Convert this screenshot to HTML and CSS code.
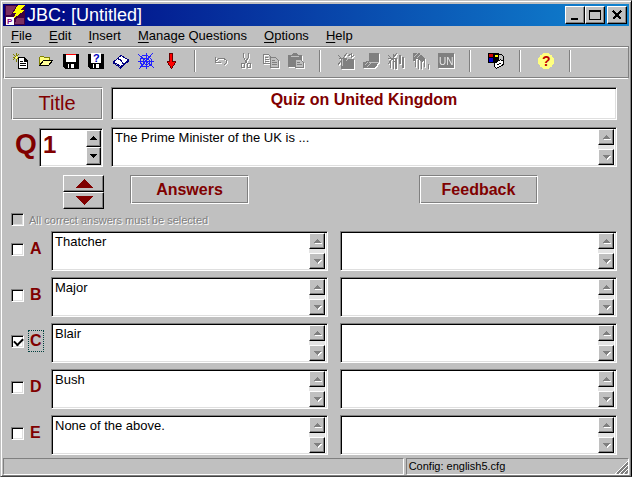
FILE: index.html
```html
<!DOCTYPE html>
<html lang="en">
<head>
    <meta charset="UTF-8">
    <meta name="viewport" content="width=device-width, initial-scale=1.0">
    <title>JBC: [Untitled]</title>
    <link rel="stylesheet" href="styles.css">
</head>
<body>
    <svg class="defs" width="0" height="0" aria-hidden="true">
        <symbol id="up" viewBox="0 0 7 4"><path d="M3 0h1v1h1v1h1v1h1v1H0V3h1V2h1V1h1z"/></symbol>
        <symbol id="down" viewBox="0 0 7 4"><path d="M0 0h7v1H6v1H5v1H4v1H3V3H2V2H1V1H0z"/></symbol>
    </svg>
    <div class="window">
        <header class="titlebar">
            <svg class="app-icon" viewBox="0 0 20 20" aria-hidden="true">
                <path fill="#400040" d="M0 0h20v20H0z"/>
                <path fill="#7c3060" d="M1 1h10L6 10H1zM12 13h7v6h-9z"/>
                <path fill="#ff0" d="M13 0h7l-4 5h4L8 14l3-6H8z"/>
                <path fill="#fff" d="M1 12h8v8H1z"/>
                <text x="2" y="19" class="tiny" fill="#800080">P</text>
            </svg>
            <h1>JBC: [Untitled]</h1>
            <div class="window-buttons">
                <button type="button" aria-label="Minimize"><svg viewBox="0 0 12 12"><path d="M2 9h7v2H2z"/></svg></button>
                <button type="button" aria-label="Maximize"><svg viewBox="0 0 12 12"><path fill-rule="evenodd" d="M0 1h12v10H0zM1 3v7h10V3z"/></svg></button>
                <button type="button" class="close" aria-label="Close"><svg viewBox="0 0 12 12"><path fill="none" stroke="#000" stroke-width="2" d="M2 2l8 8M10 2l-8 8"/></svg></button>
            </div>
        </header>

        <nav class="menubar">
            <a href="#"><u>F</u>ile</a>
            <a href="#"><u>E</u>dit</a>
            <a href="#"><u>I</u>nsert</a>
            <a href="#"><u>M</u>anage Questions</a>
            <a href="#"><u>O</u>ptions</a>
            <a href="#"><u>H</u>elp</a>
        </nav>

        <div class="toolbar">
            <button type="button" aria-label="New">
                <svg viewBox="0 0 16 16">
                    <path stroke="#808000" d="M3 0v9M0 4h8M0 1l6 6M6 1L0 7"/>
                    <path stroke="#ff6" d="M3 3v3M2 4h3"/>
                    <path fill="#fff" stroke="#000" d="M5.500 4.500h6l3 3v8h-9z"/>
                    <path stroke="#000" d="M11.500 4v4h3M7 8.500h3M7 10.500h6M7 12.500h6"/>
                </svg>
            </button>
            <button type="button" aria-label="Open">
                <svg viewBox="0 0 16 16">
                    <path fill="#ffff80" stroke="#808000" d="M1.500 12.500v-8l1-1h3l1 1h5v3h3l-4 5z"/>
                    <path fill="#ff9" stroke="#000" d="M1.500 12.500l4-5h9l-4 5z"/>
                </svg>
            </button>
            <button type="button" aria-label="Save">
                <svg viewBox="0 0 16 16">
                    <path fill="#000" d="M0 1h16v15H2l-2-2z"/>
                    <path fill="#fff" d="M3 2h10v7H3zM5 11h6v4H5z"/>
                    <path fill="#f00" d="M3 1h10v1H3z"/>
                    <path fill="#000" d="M6 11h2v4H6z"/>
                </svg>
            </button>
            <button type="button" aria-label="Save as">
                <svg viewBox="0 0 16 16">
                    <path fill="#000" d="M0 1h16v15H2l-2-2z"/>
                    <path fill="#fff" d="M3 0h10v10H3zM5 11h6v4H5z"/>
                    <path fill="#000" d="M6 11h2v4H6z"/>
                    <text x="5" y="9" class="small-mark" fill="#0000c0">?</text>
                </svg>
            </button>
            <button type="button" aria-label="Web page">
                <svg viewBox="0 0 16 16">
                    <path fill="#fff" stroke="#000080" d="M.5 9L8 2.500 15.500 7 8 13.500z"/>
                    <path stroke="#000080" fill="none" d="M.5 9v1l7 5 8-7V7M4.500 5.500l3 1.500 3 4"/>
                </svg>
            </button>
            <button type="button" aria-label="Export web">
                <svg viewBox="0 0 16 16">
                    <path fill="none" stroke="#22f" d="M0 1l16 14M15 0L1 16M8 0v16M0 8h16M4 3l5-1 4 4 1 5-5 3-5-1-2-5zM6 5h4l2 4-3 3-4-2z"/>
                </svg>
            </button>
            <button type="button" aria-label="Download">
                <svg viewBox="0 0 16 16">
                    <path fill="#f00" stroke="#600" d="M6.500.5h3v8h3v1l-4 6-4-6v-1h2z"/>
                </svg>
            </button>
            <span class="separator"></span>
            <button type="button" disabled aria-label="Undo">
                <svg viewBox="0 0 16 16"><path fill="none" stroke="#808080" d="M2.500 4v5h5M3 8l3-3h4l3 2v3l-2 2"/></svg>
            </button>
            <button type="button" disabled aria-label="Cut">
                <svg viewBox="0 0 16 16"><path fill="none" stroke="#808080" d="M5.500 0v4l4 7M10.500 0v4l-4 7M3.500 10.500h3v4h-3zM9.500 10.500h3v4h-3z"/></svg>
            </button>
            <button type="button" disabled aria-label="Copy">
                <svg viewBox="0 0 16 16">
                    <path fill="none" stroke="#808080" d="M.5 1.500h5l2 2v7h-7zM2 4.500h3M2 6.500h4M2 8.500h4"/>
                    <path fill="#c0c0c0" stroke="#808080" d="M7.500 4.500h5l3 3v7h-8zM9 7.500h3M9 9.500h5M9 11.500h5"/>
                </svg>
            </button>
            <button type="button" disabled aria-label="Paste">
                <svg viewBox="0 0 16 16">
                    <path fill="#808080" d="M0 2h4l1-2h4l1 2h4v12H0z"/>
                    <path fill="#c0c0c0" stroke="#808080" d="M7.500 6.500h5l3 3v5h-8zM9 9.500h3M9 11.500h5"/>
                    <path stroke="#c0c0c0" d="M3 3.500h8"/>
                </svg>
            </button>
            <span class="separator"></span>
            <button type="button" disabled aria-label="Web link">
                <svg viewBox="0 0 16 16">
                    <path fill="#808080" d="M3 6h13v10H3z"/>
                    <path fill="none" stroke="#808080" d="M0 2l9 9M9 0L0 12M1 5h8M10 3l3-2v4l3-3"/>
                    <path stroke="#c0c0c0" d="M4 6v7M8 8l3-3"/>
                </svg>
            </button>
            <button type="button" disabled aria-label="Picture">
                <svg viewBox="0 0 16 16">
                    <path fill="#808080" d="M6 0h10v9l-4 6H0V9l6-1z"/>
                    <path fill="none" stroke="#c0c0c0" d="M6 9l4 1 6-1M2 12l3-3M4 14l4-4"/>
                </svg>
            </button>
            <button type="button" disabled aria-label="Local link">
                <svg viewBox="0 0 16 16">
                    <path fill="none" stroke="#808080" d="M0 2l9 9M9 0L0 11M0 5h9M5 1v15M2 9v6"/>
                    <path stroke="#808080" stroke-width="2" d="M8 5v11M12 2v9M15 4v11"/>
                </svg>
            </button>
            <button type="button" disabled aria-label="Media link">
                <svg viewBox="0 0 16 16">
                    <path fill="#808080" d="M0 0h7l5 6-3 3-5-4-3 3H0z"/>
                    <path stroke="#808080" d="M2.500 6v8M5.500 4v12M8.500 8v8M11.500 6v8M15.500 11v5M0 5h10"/>
                    <path stroke="#c0c0c0" d="M1 4l4-4M4 5l4-4"/>
                </svg>
            </button>
            <button type="button" disabled aria-label="Unicode">
                <svg viewBox="0 0 16 16">
                    <path fill="#808080" d="M0 0h16v15H0z"/>
                    <text x="1" y="12" class="unicode" fill="#e8e8e8">UN</text>
                </svg>
            </button>
            <span class="separator"></span>
            <button type="button" aria-label="Configuration">
                <svg viewBox="0 0 16 16">
                    <path d="M0 0h11v10H0z"/>
                    <path fill="#c00" d="M1 1h4v3H1z"/>
                    <path fill="#00c" d="M1 5h4v4H1z"/>
                    <path fill="#ff0" d="M7 2h3v2H7z"/>
                    <path fill="none" stroke="#000" d="M10.500 1.500h3l2 2v4"/>
                    <path fill="#fff" stroke="#000" d="M6.500 10.500l6-4 3 2v3l-7 4-2-2z"/>
                    <path stroke="#000" d="M9 12l4-2"/>
                </svg>
            </button>
            <span class="separator"></span>
            <button type="button" aria-label="Help">
                <svg viewBox="0 0 16 16">
                    <circle cx="8" cy="8" r="8" fill="#ffff80"/>
                    <text x="4" y="13" class="mark" fill="#c00000">?</text>
                </svg>
            </button>
            <span class="separator"></span>
        </div>

        <main class="quiz">
            <div class="title-row">
                <button type="button" class="title-button">Title</button>
                <input type="text" class="field quiz-title" aria-label="Quiz title" value="Quiz on United Kingdom">
            </div>

            <div class="question-row">
                <div class="number">
                    <label for="number">Q</label>
                    <div class="field spinner">
                        <input type="text" id="number" value="1">
                        <div class="spin-buttons">
                            <button type="button" aria-label="Next question"><svg><use href="#up"/></svg></button>
                            <button type="button" aria-label="Previous question"><svg><use href="#down"/></svg></button>
                        </div>
                    </div>
                </div>
                <div class="field memo">
                    <textarea aria-label="Question">The Prime Minister of the UK is ...</textarea>
                    <div class="scroll">
                        <button type="button" disabled aria-label="Scroll up"><svg><use href="#up"/></svg></button>
                        <button type="button" disabled aria-label="Scroll down"><svg><use href="#down"/></svg></button>
                    </div>
                </div>
            </div>

            <div class="columns headings">
                <div class="answers-heading">
                    <div class="move">
                        <button type="button" aria-label="Move answers up"><svg viewBox="0 0 18 9"><path d="M9 0l9 9H0z"/></svg></button>
                        <button type="button" aria-label="Move answers down"><svg viewBox="0 0 18 9"><path d="M0 0h18L9 9z"/></svg></button>
                    </div>
                    <h2>Answers</h2>
                </div>
                <h2>Feedback</h2>
            </div>

            <div class="all-correct">
                <input type="checkbox" id="allCorrect" disabled>
                <label for="allCorrect">All correct answers must be selected</label>
            </div>

            <div class="answers">
                <div class="columns">
                    <div class="correct"><input type="checkbox" id="a"><label for="a">A</label></div>
                    <div class="field memo">
                        <textarea aria-label="Answer A">Thatcher</textarea>
                        <div class="scroll">
                            <button type="button" disabled aria-label="Scroll up"><svg><use href="#up"/></svg></button>
                            <button type="button" disabled aria-label="Scroll down"><svg><use href="#down"/></svg></button>
                        </div>
                    </div>
                    <div class="field memo">
                        <textarea aria-label="Feedback A"></textarea>
                        <div class="scroll">
                            <button type="button" disabled aria-label="Scroll up"><svg><use href="#up"/></svg></button>
                            <button type="button" disabled aria-label="Scroll down"><svg><use href="#down"/></svg></button>
                        </div>
                    </div>
                </div>
                <div class="columns">
                    <div class="correct"><input type="checkbox" id="b"><label for="b">B</label></div>
                    <div class="field memo">
                        <textarea aria-label="Answer B">Major</textarea>
                        <div class="scroll">
                            <button type="button" disabled aria-label="Scroll up"><svg><use href="#up"/></svg></button>
                            <button type="button" disabled aria-label="Scroll down"><svg><use href="#down"/></svg></button>
                        </div>
                    </div>
                    <div class="field memo">
                        <textarea aria-label="Feedback B"></textarea>
                        <div class="scroll">
                            <button type="button" disabled aria-label="Scroll up"><svg><use href="#up"/></svg></button>
                            <button type="button" disabled aria-label="Scroll down"><svg><use href="#down"/></svg></button>
                        </div>
                    </div>
                </div>
                <div class="columns">
                    <div class="correct"><input type="checkbox" id="c" checked><label for="c" class="focused">C</label></div>
                    <div class="field memo">
                        <textarea aria-label="Answer C">Blair</textarea>
                        <div class="scroll">
                            <button type="button" disabled aria-label="Scroll up"><svg><use href="#up"/></svg></button>
                            <button type="button" disabled aria-label="Scroll down"><svg><use href="#down"/></svg></button>
                        </div>
                    </div>
                    <div class="field memo">
                        <textarea aria-label="Feedback C"></textarea>
                        <div class="scroll">
                            <button type="button" disabled aria-label="Scroll up"><svg><use href="#up"/></svg></button>
                            <button type="button" disabled aria-label="Scroll down"><svg><use href="#down"/></svg></button>
                        </div>
                    </div>
                </div>
                <div class="columns">
                    <div class="correct"><input type="checkbox" id="d"><label for="d">D</label></div>
                    <div class="field memo">
                        <textarea aria-label="Answer D">Bush</textarea>
                        <div class="scroll">
                            <button type="button" disabled aria-label="Scroll up"><svg><use href="#up"/></svg></button>
                            <button type="button" disabled aria-label="Scroll down"><svg><use href="#down"/></svg></button>
                        </div>
                    </div>
                    <div class="field memo">
                        <textarea aria-label="Feedback D"></textarea>
                        <div class="scroll">
                            <button type="button" disabled aria-label="Scroll up"><svg><use href="#up"/></svg></button>
                            <button type="button" disabled aria-label="Scroll down"><svg><use href="#down"/></svg></button>
                        </div>
                    </div>
                </div>
                <div class="columns">
                    <div class="correct"><input type="checkbox" id="e"><label for="e">E</label></div>
                    <div class="field memo">
                        <textarea aria-label="Answer E">None of the above.</textarea>
                        <div class="scroll">
                            <button type="button" disabled aria-label="Scroll up"><svg><use href="#up"/></svg></button>
                            <button type="button" disabled aria-label="Scroll down"><svg><use href="#down"/></svg></button>
                        </div>
                    </div>
                    <div class="field memo">
                        <textarea aria-label="Feedback E"></textarea>
                        <div class="scroll">
                            <button type="button" disabled aria-label="Scroll up"><svg><use href="#up"/></svg></button>
                            <button type="button" disabled aria-label="Scroll down"><svg><use href="#down"/></svg></button>
                        </div>
                    </div>
                </div>
            </div>
        </main>

        <footer class="statusbar">
            <span></span>
            <span class="config">Config: english5.cfg
                <svg class="grip" viewBox="0 0 13 13" aria-hidden="true">
                    <path stroke="#fff" d="M0 13L13 0M4 13l9-9M8 13l5-5"/>
                    <path stroke="#808080" stroke-width="2" d="M2 13L13 2M6 13l7-7M10 13l3-3"/>
                </svg>
            </span>
        </footer>
    </div>
</body>
</html>
```
FILE: styles.css
```css
* {
    box-sizing: border-box;
}

body {
    margin: 0;
    font-family: "Liberation Sans", Arial, sans-serif;
    font-size: 13px;
    color: #000;
    background-color: #c0c0c0;
}

button, input, textarea {
    font-family: inherit;
    border-radius: 0;
    margin: 0;
}

svg {
    display: block;
    shape-rendering: crispEdges;
}

.defs {
    position: absolute;
}

.window {
    display: flex;
    flex-direction: column;
    min-height: 100vh;
    padding: 2px 2px 1px;
    background-color: #c0c0c0;
    border: 1px solid;
    border-color: #c0c0c0 #000 #404040 #c0c0c0;
    box-shadow: inset 1px 1px #fff, inset -1px -1px #808080;
}

/* raised grey buttons */
.window-buttons button,
.spin-buttons button,
.scroll button,
.move button {
    display: flex;
    align-items: center;
    justify-content: center;
    padding: 0;
    background-color: #c0c0c0;
    border: 1px solid;
    border-color: #fff #000 #000 #fff;
    box-shadow: inset -1px -1px #808080;
}

/* title bar */
.titlebar {
    display: flex;
    align-items: center;
    height: 22px;
    margin-top: 1px;
    padding-right: 2px;
    background: linear-gradient(to right, #000080, #1084d0);
}

.app-icon {
    width: 20px;
    height: 20px;
    margin: 0 2px;
}

.titlebar h1 {
    flex: 1;
    margin: 0;
    font-size: 18px;
    line-height: 22px;
    font-weight: normal;
    color: #fff;
}

.window-buttons {
    display: flex;
}

.window-buttons button {
    width: 20px;
    height: 18px;
}

.window-buttons svg {
    width: 12px;
    height: 12px;
}

.window-buttons .close {
    margin-left: 2px;
}

/* menu */
.menubar {
    display: flex;
    gap: 17px;
    height: 20px;
    padding: 0 8px;
}

.menubar a {
    line-height: 20px;
    color: #000;
    text-decoration: none;
}

.menubar u {
    text-underline-offset: 2px;
}

/* toolbar */
.toolbar {
    display: flex;
    align-items: center;
    height: 33px;
    padding: 0 4px 3px;
    border: 1px solid;
    border-color: #808080 #808080 #fff #808080;
    box-shadow: inset 1px 1px #fff, inset 0 -1px #808080;
}

.toolbar button {
    display: flex;
    justify-content: center;
    width: 25px;
    padding: 0;
    border: none;
    background: none;
}

.toolbar svg {
    width: 16px;
    height: 16px;
    overflow: visible;
}

.toolbar button:disabled svg {
    filter: drop-shadow(1px 1px 0 #fff);
}

.separator {
    width: 2px;
    height: 22px;
    margin: 0 12px 0 11px;
    border-left: 1px solid #808080;
    border-right: 1px solid #fff;
}

.tiny {
    font-size: 8px;
    font-weight: bold;
}

.small-mark {
    font-size: 11px;
    font-weight: bold;
}

.unicode {
    font-size: 10px;
}

.mark {
    font-size: 14px;
    font-weight: bold;
}

/* form */
.quiz {
    flex: 1;
    padding: 8px 12px 2px 8px;
    color: #800000;
}

.field {
    background-color: #fff;
    border: 1px solid;
    border-color: #808080 #fff #fff #808080;
    box-shadow: inset 1px 1px #000, inset -1px -1px #dfdfdf;
}

.title-row,
.question-row {
    display: grid;
    grid-template-columns: 92px 1fr;
    gap: 8px;
}

.title-button,
.headings h2 {
    background-color: #c0c0c0;
    border: 1px solid;
    border-color: #808080 #fff #fff #808080;
    box-shadow: inset 1px 1px #fff, inset -1px -1px #808080;
}

.title-button {
    height: 33px;
    padding: 0;
    font-size: 20px;
    color: #800000;
}

.quiz-title {
    min-width: 0;
    height: 33px;
    padding: 0 0 8px;
    font-size: 16px;
    font-weight: bold;
    text-align: center;
    color: #800000;
}

.question-row {
    margin-top: 7px;
}

.number {
    display: flex;
    align-items: center;
    justify-content: space-between;
    padding-left: 4px;
}

.number label {
    font-size: 28px;
    line-height: 32px;
    font-weight: bold;
    padding-bottom: 6px;
}

.spinner {
    display: flex;
    width: 64px;
    height: 39px;
    padding: 1px;
}

.spinner input {
    flex: 1;
    min-width: 0;
    padding: 0 2px 4px;
    border: none;
    background: none;
    font-size: 24px;
    font-weight: bold;
    color: #800000;
}

.spin-buttons,
.scroll {
    display: flex;
    flex-direction: column;
}

.spin-buttons button {
    flex: 1;
    width: 15px;
}

.spin-buttons svg,
.scroll svg {
    width: 7px;
    height: 4px;
}

.memo {
    display: flex;
    height: 40px;
    padding: 1px 2px 1px 1px;
}

.memo textarea {
    flex: 1;
    min-width: 0;
    padding: 1px 2px;
    border: none;
    background: none;
    font-size: 13px;
    line-height: 16px;
    color: #000;
    resize: none;
    overflow: hidden;
}

.scroll {
    justify-content: space-between;
    background-color: #e4e4e4;
}

.scroll button {
    width: 16px;
    height: 16px;
}

.scroll svg {
    fill: #808080;
    filter: drop-shadow(1px 1px 0 #fff);
}

.columns {
    display: grid;
    grid-template-columns: 28px 1fr 1fr;
    gap: 12px;
}

.headings {
    margin-top: 8px;
    justify-items: center;
}

.answers-heading {
    display: grid;
    grid-column: 2;
    grid-template-columns: 1fr auto 1fr;
    width: 100%;
    height: 34px;
}

.headings h2 {
    width: 119px;
    height: 29px;
    margin: 0;
    font-size: 16px;
    line-height: 27px;
    text-align: center;
}

.move {
    width: 41px;
    margin-left: 12px;
}

.move button {
    width: 100%;
    height: 17px;
}

.move svg {
    width: 18px;
    height: 9px;
    fill: #800000;
}

input[type="checkbox"] {
    appearance: none;
    flex: none;
    width: 13px;
    height: 13px;
    background-color: #fff;
    border: 1px solid;
    border-color: #808080 #fff #fff #808080;
    box-shadow: inset 1px 1px #000, inset -1px -1px #dfdfdf;
}

input[type="checkbox"]:disabled {
    background-color: #c0c0c0;
}

input[type="checkbox"]:checked::before {
    content: "";
    display: block;
    width: 7px;
    height: 4px;
    margin: 2px;
    border: solid #000;
    border-width: 0 0 2px 2px;
    transform: rotate(-45deg);
}

.all-correct {
    display: flex;
    align-items: center;
    gap: 5px;
    height: 13px;
    margin: 4px 0 5px;
    font-size: 11px;
    color: #808080;
    text-shadow: 1px 1px #fff;
}

.answers {
    display: grid;
    gap: 6px;
}

.correct {
    display: flex;
    align-items: center;
    gap: 5px;
    padding-bottom: 4px;
}

.correct label {
    padding: 0 1px;
    font-size: 16px;
    line-height: 20px;
    font-weight: bold;
}

.correct .focused {
    outline: 1px dotted #004040;
}

/* status bar */
.statusbar {
    display: grid;
    grid-template-columns: 400fr 223fr;
    gap: 2px;
    height: 17px;
    font-size: 11px;
    line-height: 15px;
}

.statusbar span {
    border: 1px solid;
    border-color: #808080 #fff #fff #808080;
}

.config {
    display: flex;
    align-items: flex-end;
    justify-content: space-between;
    padding-left: 2px;
}

.grip {
    width: 13px;
    height: 13px;
}
```
